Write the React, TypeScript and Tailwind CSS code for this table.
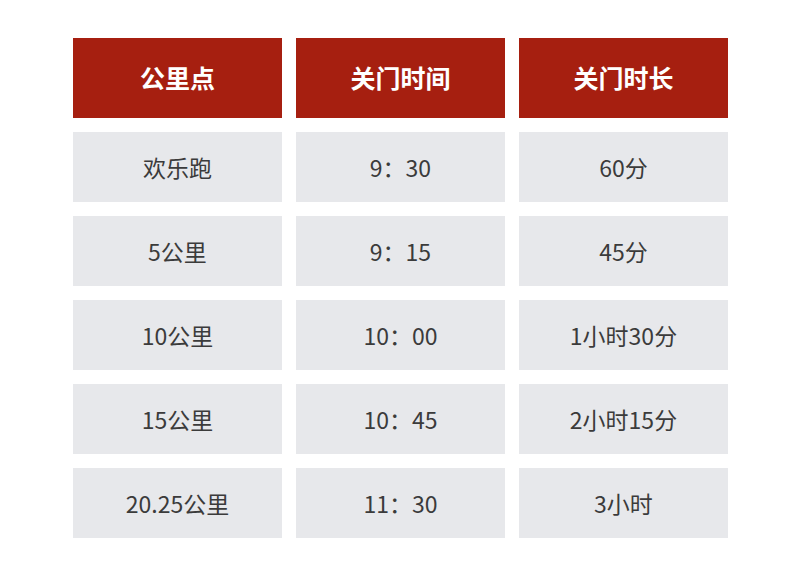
const header = ["公里点", "关门时间", "关门时长"];

const rows = [
  ["欢乐跑", "9：30", "60分"],
  ["5公里", "9：15", "45分"],
  ["10公里", "10：00", "1小时30分"],
  ["15公里", "10：45", "2小时15分"],
  ["20.25公里", "11：30", "3小时"],
];

export default function App() {
  return (
    <div
      className="w-[800px] h-[588px] bg-white pt-[38px] pl-[73px]"
      style={{ fontFamily: '"Noto Sans CJK SC", "Noto Sans", sans-serif' }}
    >
      <div className="grid w-[655px] grid-cols-3 gap-x-[14px]">
        {header.map((h) => (
          <div
            key={h}
            className="flex h-[80px] items-center justify-center bg-[#a61f10] text-[25px] font-bold text-white"
          >
            {h}
          </div>
        ))}
      </div>
      <div className="mt-[14px] grid w-[655px] grid-cols-3 gap-x-[14px] gap-y-[14px]">
        {rows.map((r) =>
          r.map((c, i) => (
            <div
              key={r[0] + i}
              className="flex h-[70px] items-center justify-center bg-[#e7e8eb] text-[23px] text-[#3b3b3b]"
            >
              {c}
            </div>
          ))
        )}
      </div>
    </div>
  );
}
